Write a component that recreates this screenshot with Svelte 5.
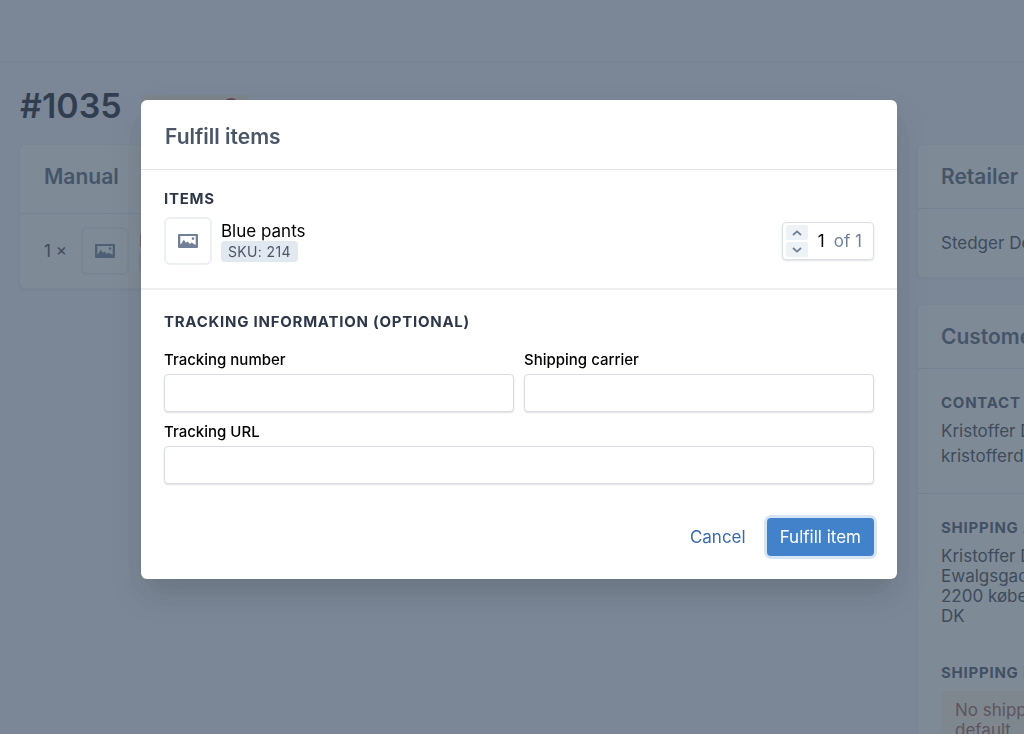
<script lang="ts">
	const lineItems = [{ name: 'Blue pants', sku: '214', quantity: 1 }];

	const address = ['Kristoffer Dahl', 'Ewalgsgade 12', '2200 københavn', 'DK'];

	let quantities = $state(lineItems.map((item) => item.quantity));
	let trackingNumber = $state('');
	let carrier = $state('');
	let trackingUrl = $state('');
	let open = $state(true);

	function step(i: number, amount: number) {
		quantities[i] = Math.min(lineItems[i].quantity, Math.max(0, quantities[i] + amount));
	}

	function submit(e: SubmitEvent) {
		e.preventDefault();
		open = false;
	}
</script>

{#snippet thumbnail()}
	<span class="thumb">
		<svg width="20" height="14" viewBox="0 0 20 14" aria-hidden="true">
			<path fill="currentColor" fill-rule="evenodd" d="M1 0H19Q20 0 20 1V13Q20 14 19 14H1Q0 14 0 13V1Q0 0 1 0ZM2.3 2V10.6L3.6 9.2L5.8 5.8L8 8.8L9.5 7.4L12 10L13.6 8.6L15.2 9.6L17.7 11V2Z" />
			<circle cx="15" cy="4.6" r="1.3" fill="currentColor" />
		</svg>
	</span>
{/snippet}

<div class="page">
	<header class="topbar"></header>
	<main class="layout">
		<div class="order-head">
			<h1>#1035</h1>
			<span class="badge">Unfulfilled <i></i></span>
		</div>

		<section class="card order-card">
			<h2>Manual</h2>
			{#each lineItems as item}
				<div class="order-line">
					<span class="count">{item.quantity} ×</span>
					{@render thumbnail()}
					<div class="product">
						<span>{item.name}</span>
						<span class="sku">SKU: {item.sku}</span>
					</div>
				</div>
			{/each}
		</section>

		<aside class="sidebar">
			<section class="card">
				<h2>Retailer</h2>
				<div class="block">Stedger Demo</div>
			</section>
			<section class="card">
				<h2>Customer</h2>
				<div class="block contact">
					<h3>Contact</h3>
					<p>Kristoffer Dahl</p>
					<p>kristofferdahl</p>
				</div>
				<div class="block">
					<h3>Shipping address</h3>
					<address>
						{#each address as line}
							<span>{line}</span>
						{/each}
					</address>
					<h3>Shipping method</h3>
					<div class="warning">No shipping<br />default</div>
				</div>
			</section>
		</aside>
	</main>
</div>

{#if open}
	<div class="overlay">
		<form class="modal" role="dialog" aria-modal="true" aria-labelledby="modal-title" onsubmit={submit}>
			<header class="modal-head">
				<h2 id="modal-title">Fulfill items</h2>
			</header>

			<section class="items">
				<h3>Items</h3>
				{#each lineItems as item, i}
					<div class="item">
						{@render thumbnail()}
						<div class="product">
							<span>{item.name}</span>
							<span class="sku">SKU: {item.sku}</span>
						</div>
						<div class="quantity">
							<div class="steps">
								<button type="button" aria-label="Increase quantity" onclick={() => step(i, 1)}>
									<svg width="10" height="6" viewBox="0 0 10 6"><path d="M1 5L5 1.4L9 5" /></svg>
								</button>
								<button type="button" aria-label="Decrease quantity" onclick={() => step(i, -1)}>
									<svg width="10" height="6" viewBox="0 0 10 6"><path d="M1 1L5 4.6L9 1" /></svg>
								</button>
							</div>
							<input aria-label="Quantity" inputmode="numeric" bind:value={quantities[i]} />
							<span>of {item.quantity}</span>
						</div>
					</div>
				{/each}
			</section>

			<section class="tracking">
				<h3>Tracking information (optional)</h3>
				<div class="fields">
					<div class="field">
						<label for="tracking-number">Tracking number</label>
						<input id="tracking-number" type="text" bind:value={trackingNumber} />
					</div>
					<div class="field">
						<label for="carrier">Shipping carrier</label>
						<input id="carrier" type="text" bind:value={carrier} />
					</div>
					<div class="field wide">
						<label for="tracking-url">Tracking URL</label>
						<input id="tracking-url" type="text" bind:value={trackingUrl} />
					</div>
				</div>
			</section>

			<footer class="actions">
				<button type="button" class="cancel" onclick={() => (open = false)}>Cancel</button>
				<button type="submit" class="submit">Fulfill item</button>
			</footer>
		</form>
	</div>
{/if}

<style>
	:global(body) { font-family: Inter, "Liberation Sans", sans-serif; font-size: 17px; line-height: 20px; color: #3f474f; }
	:global(*) { box-sizing: border-box; }
	h1, h2, h3, p { margin: 0; }
	button, input { font: inherit; }

	h3 {
		font-size: 15px; line-height: 20px; font-weight: 700; color: #2d3748;
		text-transform: uppercase; letter-spacing: 0.05em;
	}

	/* Order page */
	.page { height: 100vh; overflow: hidden; background: #f4f7fd; }
	.topbar { height: 62px; border-bottom: 1px solid #e0e7ee; }
	.layout {
		display: grid; grid-template-columns: 1fr 320px; column-gap: 20px;
		width: calc(100% + 213px); padding: 20px 0 0 19px; align-items: start;
	}
	.order-head { grid-column: 1 / -1; display: flex; align-items: center; gap: 19px; height: 48px; margin-bottom: 14px; padding-left: 1px; }
	h1 { font-size: 34px; line-height: 48px; font-weight: 600; color: #1a202c; }
	.badge {
		display: flex; align-items: center; gap: 9px; height: 22px; padding: 0 10px; border-radius: 4px;
		background: #f9eedd; color: #9c4221; font-size: 13px;
	}
	.badge i { width: 16px; height: 16px; border: 2px solid #b03a3a; border-radius: 50%; }

	.card { background: #fff; border: 1px solid #edf2f7; border-radius: 6px; box-shadow: 0 1px 3px rgba(0, 0, 0, 0.08); }
	.card h2 {
		padding: 0 23px; font-size: 21px; line-height: 63px; font-weight: 600; color: #56637a;
		border-bottom: 1px solid #e2e8f0;
	}
	.order-line { display: flex; align-items: center; gap: 10px; padding: 13px 24px; white-space: nowrap; }
	.count { margin-right: 4px; }
	.order-card h2 { padding: 0 24px 5px; }

	.sidebar { display: flex; flex-direction: column; gap: 26px; white-space: nowrap; }
	.block { padding: 24px 23px; }
	.block + .block { border-top: 1px solid #e2e8f0; }
	.block h3 { color: #4a5568; margin-bottom: 8px; }
	.contact p { line-height: 25px; }
	.contact h3 { margin-bottom: 6px; }
	address { display: flex; flex-direction: column; margin-bottom: 37px; font-style: normal; }
	.warning { padding: 9px 14px; border-radius: 4px; background: #fdf7e0; color: #a0605a; }

	.thumb {
		display: flex; align-items: center; justify-content: center; width: 48px; height: 48px; flex-shrink: 0;
		border: 2px solid #edf0f3; border-radius: 6px; color: #718096;
	}
	.product { display: flex; flex-direction: column; align-items: flex-start; }
	.sku {
		padding: 0 7px; border-radius: 4px; background: #e2e8f0; color: #4a5568;
		font-size: 14px; line-height: 21px; letter-spacing: 0.025em;
	}

	/* Dialog */
	.overlay { position: fixed; inset: 0; overflow: auto; padding: 100px 127px 0 141px; background: rgba(61, 78, 97, 0.66); }
	.modal {
		background: #fff; border-radius: 6px; color: #000;
		box-shadow: 0 20px 25px -5px rgba(0, 0, 0, 0.06), 0 15px 35px 0 rgba(0, 0, 0, 0.1);
	}
	.modal-head { padding: 24px 24px 19px; border-bottom: 1px solid #e2e4e8; }
	.modal-head h2 { font-size: 21px; line-height: 26px; font-weight: 600; color: #4a5568; }

	.items { padding: 19px 23px 23px; border-bottom: 2px solid #edeff1; }
	.item { display: flex; align-items: center; gap: 9px; margin-top: 8px; }
	.quantity {
		display: flex; align-items: center; height: 38px; margin-left: auto; padding: 0 11px 0 3px;
		border: 1px solid #dcdfe3; border-radius: 4px; box-shadow: 0 1px 2px rgba(0, 0, 0, 0.12); color: #718096;
	}
	.quantity input { width: 12px; margin: 0 4px 0 10px; padding: 0; border: 0; outline: 0; background: none; color: #000; }
	.steps { display: flex; flex-direction: column; gap: 2px; }
	.steps button {
		display: flex; align-items: center; justify-content: center; width: 22px; height: 15px; padding: 0;
		border: 0; border-radius: 2px; background: #edf2f7; cursor: pointer;
	}
	.steps path { fill: none; stroke: #718096; stroke-width: 1.8; }

	.tracking { padding: 22px 23px 0; }
	.fields { display: grid; grid-template-columns: 1fr 1fr; gap: 10px; margin-top: 18px; }
	.wide { grid-column: 1 / -1; }
	.field label { display: block; margin-bottom: 4px; font-size: 15px; line-height: 20px; font-weight: 500; }
	.field input {
		display: block; width: 100%; height: 38px; padding: 0 12px;
		border: 1px solid #d9dce0; border-radius: 4px; box-shadow: 0 1px 2px rgba(0, 0, 0, 0.12);
	}

	.actions { display: flex; justify-content: flex-end; gap: 8px; padding: 34px 23px 23px; }
	.actions button { height: 38px; padding: 0 13px; border: 0; border-radius: 4px; background: none; cursor: pointer; }
	.actions .cancel { color: #3869b0; }
	.actions .submit { background: #4282ca; color: #fff; box-shadow: 0 0 0 3px #d6e5f5; }
</style>
